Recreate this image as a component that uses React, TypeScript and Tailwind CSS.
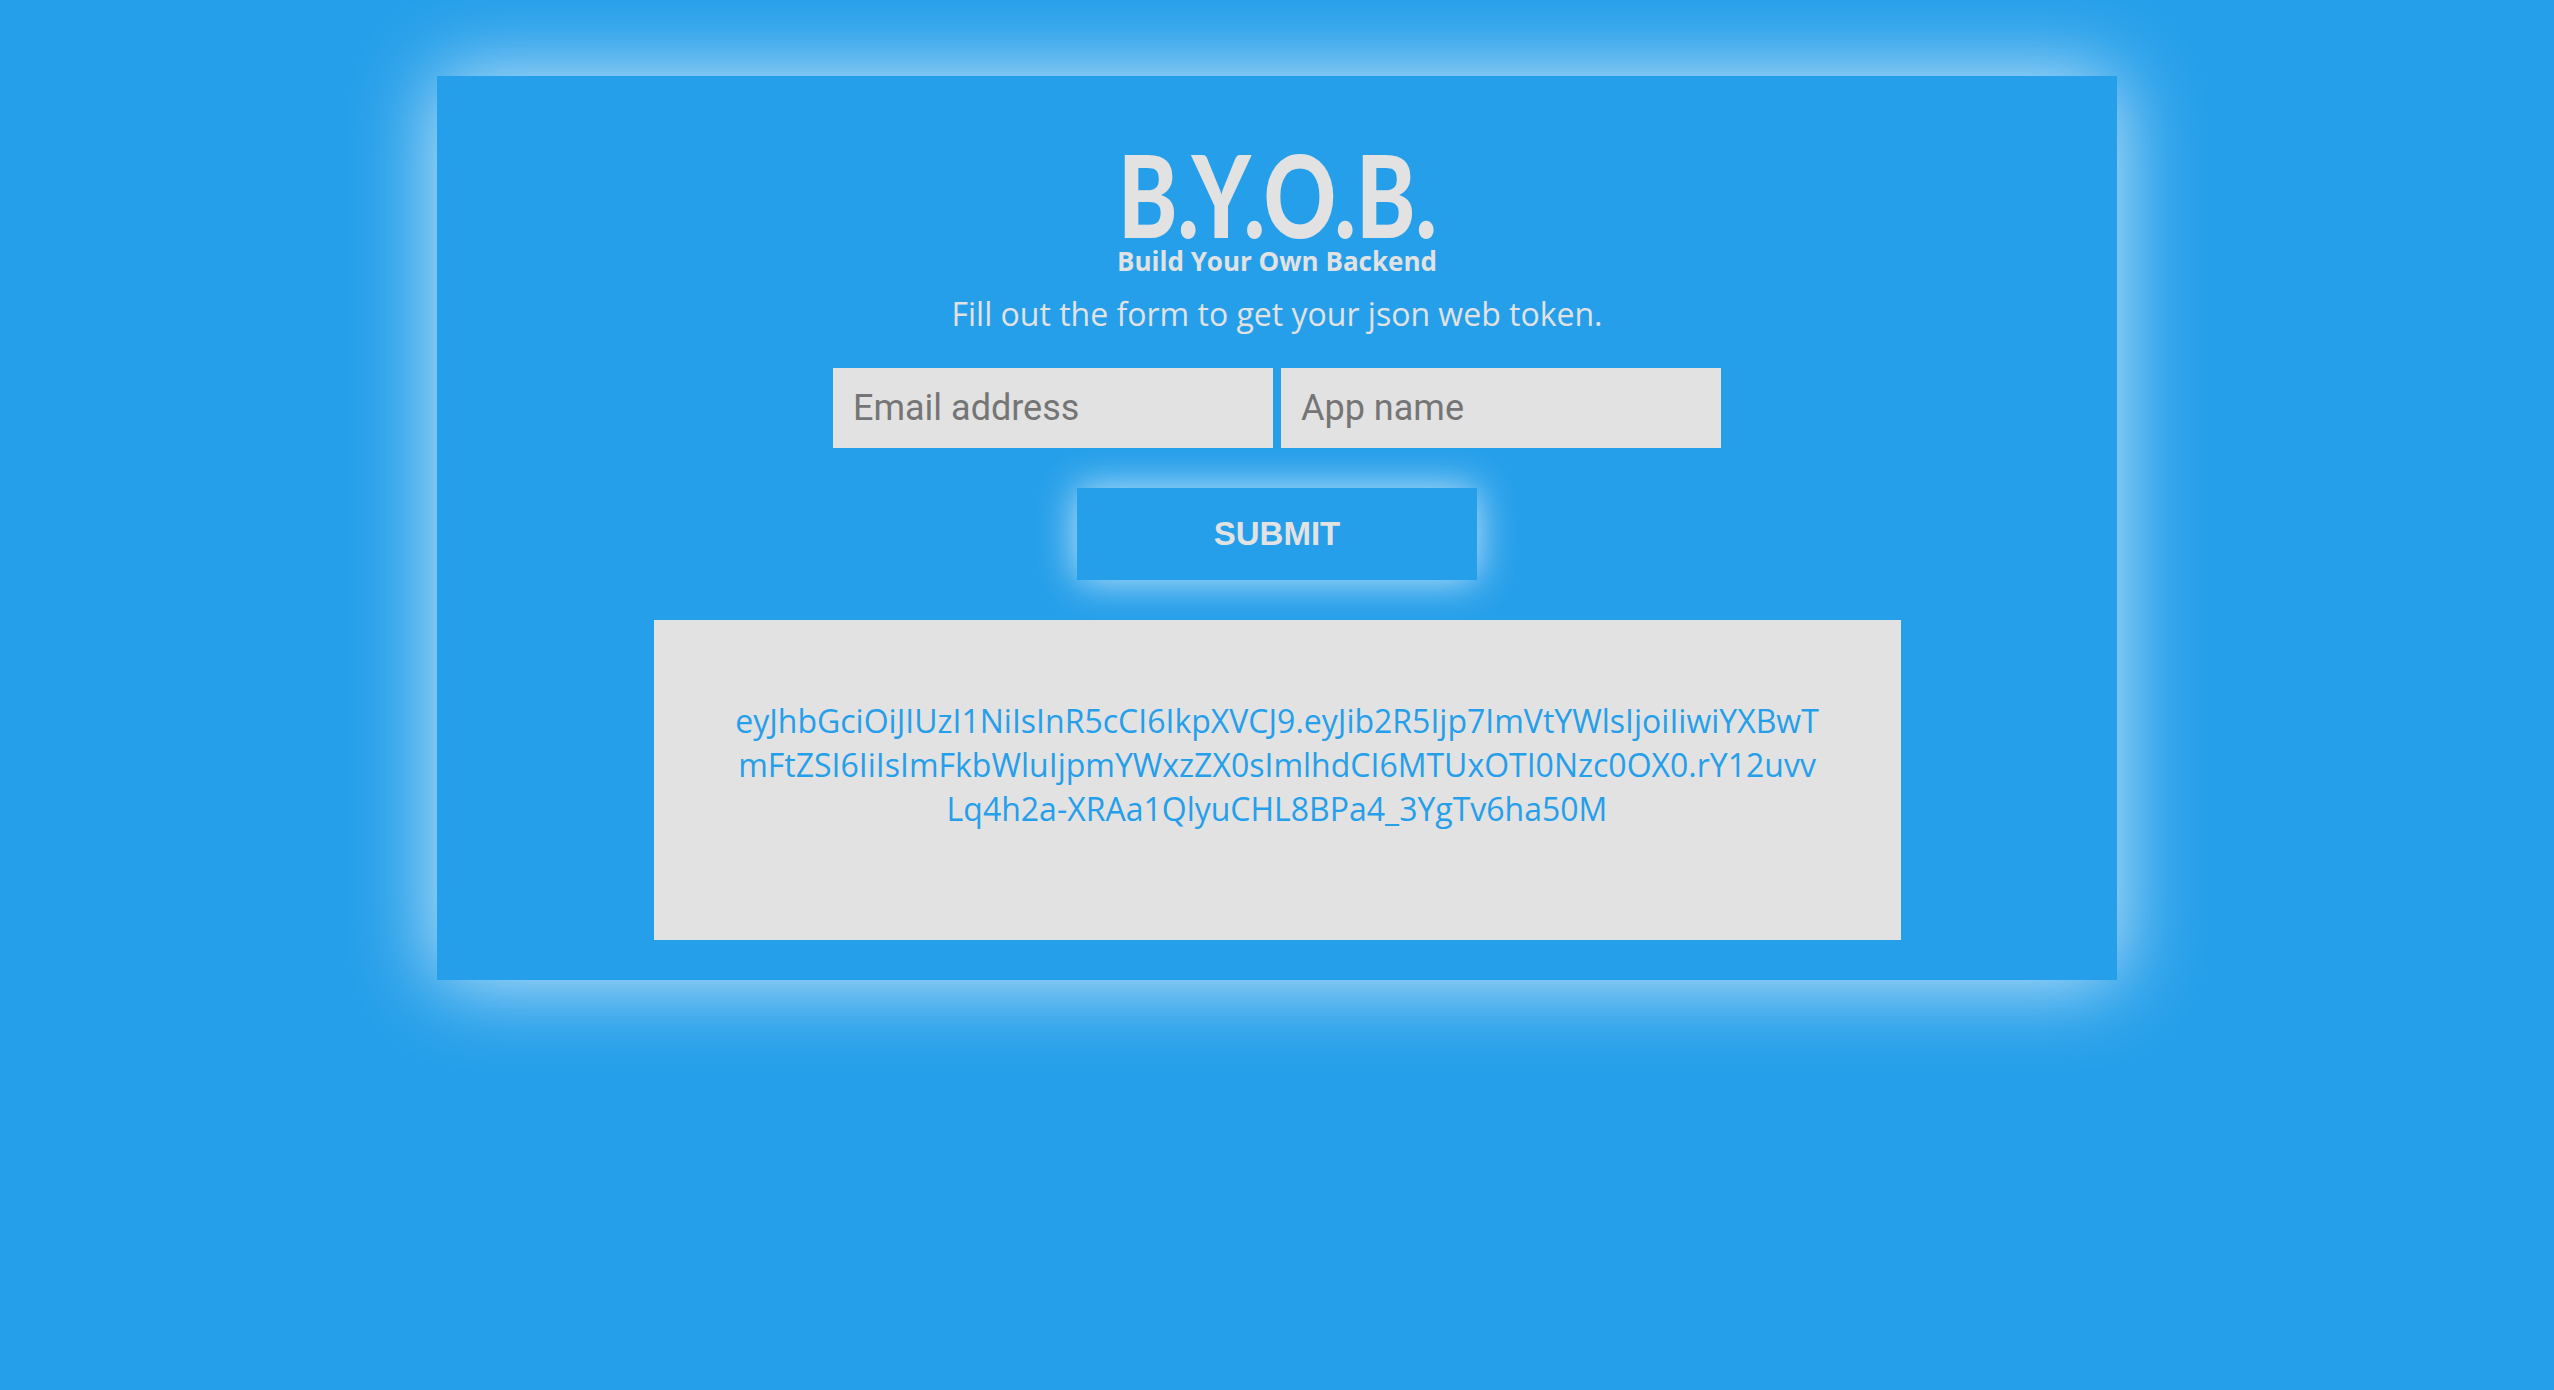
import { useState } from "react";

const token = [
  "eyJhbGciOiJIUzI1NiIsInR5cCI6IkpXVCJ9.eyJib2R5Ijp7ImVtYWlsIjoiIiwiYXBwT",
  "mFtZSI6IiIsImFkbWluIjpmYWxzZX0sImlhdCI6MTUxOTI0Nzc0OX0.rY12uvv",
  "Lq4h2a-XRAa1QlyuCHL8BPa4_3YgTv6ha50M",
];

function App() {
  const [email, setEmail] = useState("");
  const [appName, setAppName] = useState("");

  return (
    <div className="min-h-screen w-full bg-[#259fea] pt-[76px] flex justify-center items-start">
      <div className="w-[1680px] pt-[70px] pb-10 flex flex-col items-center shadow-[0_0_80px_rgba(255,255,255,0.8)]">
        {/* logo */}
        <h1 className="h-[100px] text-[115px] leading-[94px] font-black text-[#e2e2e2] scale-x-[0.78] font-['Lato',sans-serif]">
          B.Y.O.B.
        </h1>
        <div className="mt-[2px] text-[26px] leading-[26px] font-bold text-[#e2e2e2] font-['Open_Sans',sans-serif]">
          Build Your Own Backend
        </div>
        <p className="mt-6 text-[32px] leading-[31px] text-[#e2e2e2] font-['Open_Sans',sans-serif]">
          Fill out the form to get your json web token.
        </p>

        <div className="mt-[39px] flex gap-2">
          <input
            value={email}
            onChange={(e) => setEmail(e.target.value)}
            placeholder="Email address"
            className="w-[440px] h-[80px] bg-[#e2e2e2] px-5 text-[36px] text-[#555] placeholder:text-[#757575] outline-none font-['Roboto',sans-serif]"
          />
          <input
            value={appName}
            onChange={(e) => setAppName(e.target.value)}
            placeholder="App name"
            className="w-[440px] h-[80px] bg-[#e2e2e2] px-5 text-[36px] text-[#555] placeholder:text-[#757575] outline-none font-['Roboto',sans-serif]"
          />
        </div>

        <button className="mt-10 w-[400px] h-[92px] bg-[#259fea] text-[#e2e2e2] text-[33px] font-bold shadow-[0_0_40px_rgba(255,255,255,0.75)] font-['Liberation_Sans',Arial,sans-serif]">
          SUBMIT
        </button>

        <div className="mt-10 w-[1247px] h-[320px] bg-[#e2e2e2] pt-[79px] text-center text-[32px] leading-[44px] text-[#259fea] font-['Open_Sans',sans-serif]">
          {token.map((line, i) => (
            <div key={i}>{line}</div>
          ))}
        </div>
      </div>
    </div>
  );
}

export default App;
